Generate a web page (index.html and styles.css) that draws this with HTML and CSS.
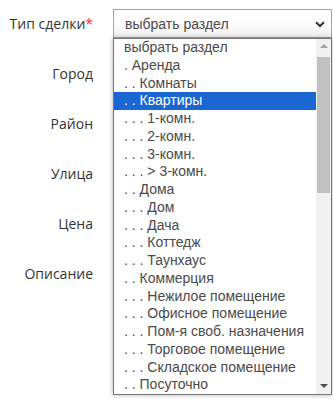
FILE: index.html
```html
<!DOCTYPE html>
<html lang="ru">
<head>
  <meta charset="UTF-8" />
  <meta name="viewport" content="width=device-width, initial-scale=1" />
  <title>Новое объявление</title>
  <link rel="stylesheet" href="styles.css">
</head>
<body>
  <form class="form" autocomplete="off">
    <div class="row">
      <label class="label">Тип сделки<span class="req">*</span></label>
      <div class="field">
        <div class="select">
          <span>выбрать раздел</span>
          <svg class="chevron" width="10" height="7" viewBox="0 0 10 7">
            <path d="M1 1.2 L5 5 L9 1.2" fill="none" stroke="#333" stroke-width="2"/>
          </svg>
        </div>
        <div class="menu">
          <ul class="options">
            <li>выбрать раздел</li>
            <li>. Аренда</li>
            <li>. . Комнаты</li>
            <li class="active">. . Квартиры</li>
            <li>. . . 1-комн.</li>
            <li>. . . 2-комн.</li>
            <li>. . . 3-комн.</li>
            <li>. . . &gt; 3-комн.</li>
            <li>. . Дома</li>
            <li>. . . Дом</li>
            <li>. . . Дача</li>
            <li>. . . Коттедж</li>
            <li>. . . Таунхаус</li>
            <li>. . Коммерция</li>
            <li>. . . Нежилое помещение</li>
            <li>. . . Офисное помещение</li>
            <li>. . . Пом-я своб. назначения</li>
            <li>. . . Торговое помещение</li>
            <li>. . . Складское помещение</li>
            <li>. . Посуточно</li>
          </ul>
          <div class="scrollbar">
            <span class="arrow up"></span>
            <span class="thumb"></span>
            <span class="arrow down"></span>
          </div>
        </div>
      </div>
    </div>
    <div class="row">
      <label class="label">Город</label>
      <div class="field"><input class="input" type="text"></div>
    </div>
    <div class="row">
      <label class="label">Район</label>
      <div class="field"><input class="input" type="text"></div>
    </div>
    <div class="row">
      <label class="label">Улица</label>
      <div class="field"><input class="input" type="text"></div>
    </div>
    <div class="row">
      <label class="label">Цена</label>
      <div class="field"><input class="input" type="text"></div>
    </div>
    <div class="row">
      <label class="label">Описание</label>
      <div class="field"><input class="input" type="text"></div>
    </div>
  </form>
</body>
</html>
```

FILE: styles.css
```css
html, body {
  min-height: 100%;
}
body {
  margin: 0;
  min-height: 399px;
  background: #fff;
  font-family: 'Open Sans', sans-serif;
  color: #333;
}
.form {
  padding-top: 9px;
  display: flex;
  flex-direction: column;
  gap: 21px;
}
.row {
  display: grid;
  grid-template-columns: 93px 219px;
  column-gap: 20px;
  align-items: center;
  height: 29px;
}
.label {
  text-align: right;
  font-size: 14px;
  color: #333;
}
.req {
  color: #e53935;
}
.field {
  position: relative;
  height: 29px;
}
.input {
  box-sizing: border-box;
  width: 100%;
  height: 29px;
  border: 1px solid #ccc;
}
.select {
  box-sizing: border-box;
  height: 29px;
  border: 1px solid #f0962e;
  background: linear-gradient(#fff 40%, #f1f1f1);
  display: flex;
  align-items: center;
  justify-content: space-between;
  padding: 0 6px 0 11px;
  font-family: 'Liberation Sans', Arial, sans-serif;
  font-size: 14px;
  color: #4a4a4a;
}
.chevron {
  margin-top: 1px;
}
.menu {
  position: absolute;
  top: 29px;
  left: 0;
  width: 219px;
  box-sizing: border-box;
  border: 1px solid #767676;
  background: #fff;
  box-shadow: 0 0 5px rgba(0, 0, 0, 0.3);
  z-index: 2;
  display: flex;
}
.options {
  list-style: none;
  margin: 0;
  padding: 0;
  flex: 1;
  font-family: 'Liberation Sans', Arial, sans-serif;
  font-size: 14px;
  color: #4a4a4a;
}
.options li {
  height: 17.75px;
  line-height: 17.75px;
  padding-left: 10px;
  white-space: nowrap;
}
.options li.active {
  background: #1a66d2;
  color: #fff;
}
.scrollbar {
  width: 15px;
  background: #f1f1f1;
  display: flex;
  flex-direction: column;
  align-items: center;
  padding-top: 5px;
  box-sizing: border-box;
}
.arrow {
  width: 0;
  height: 0;
  border-left: 4px solid transparent;
  border-right: 4px solid transparent;
}
.arrow.up {
  border-bottom: 4px solid #a3a3a3;
}
.arrow.down {
  border-top: 4px solid #505050;
  margin-top: auto;
  margin-bottom: 6px;
}
.thumb {
  width: 13px;
  height: 136px;
  margin-top: 9px;
  background: #c1c1c1;
}
```
